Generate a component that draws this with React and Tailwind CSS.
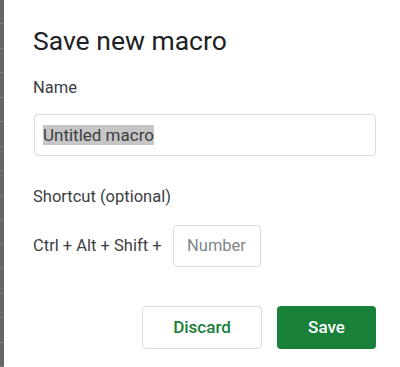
import React from 'react'

export default function App() {
  return (
    <div className="flex w-[400px] h-[367px] bg-white overflow-hidden" style={{ fontFamily: 'Roboto, "Liberation Sans", sans-serif' }}>
      {/* sheet edge behind the dialog */}
      <div className="w-1 h-full bg-[#666666] flex flex-col">
        {Array.from({ length: 15 }).map((_, i) => (
          <div key={i} className="h-[25px] border-b border-[#7a7a7a]" />
        ))}
      </div>

      <div className="flex-1 flex flex-col pl-[29px] pr-6">
        <h1 className="mt-[25px] text-[26.5px] leading-[32px] text-[#202124]">Save new macro</h1>

        <label className="mt-[21px] text-[16.5px] leading-5 text-[#3c4043]">Name</label>
        <div className="mt-[16px] h-[42px] w-[342px] ml-px rounded border border-[#dadce0] flex items-center px-2">
          <span className="bg-[#c6c6c6] text-[17px] leading-5 text-[#3c4043]">Untitled macro</span>
        </div>

        <label className="mt-[31px] text-[16.5px] leading-5 text-[#3c4043]">Shortcut (optional)</label>
        <div className="mt-[18px] flex items-center">
          <span className="text-[16.5px] text-[#3c4043]">Ctrl + Alt + Shift +</span>
          <div className="ml-[11px] w-[88px] h-[42px] rounded border border-[#dadce0] flex items-center justify-center">
            <span className="text-[16.5px] text-[#80868b]">Number</span>
          </div>
        </div>

        <div className="mt-[39px] flex justify-end gap-[15px] w-[343px]">
          <button className="w-[120px] h-[43px] rounded border border-[#dadce0] text-[#188038] text-[17px] font-medium">Discard</button>
          <button className="w-[99px] h-[43px] rounded bg-[#188038] text-white text-[17px] font-medium">Save</button>
        </div>
      </div>
    </div>
  )
}
